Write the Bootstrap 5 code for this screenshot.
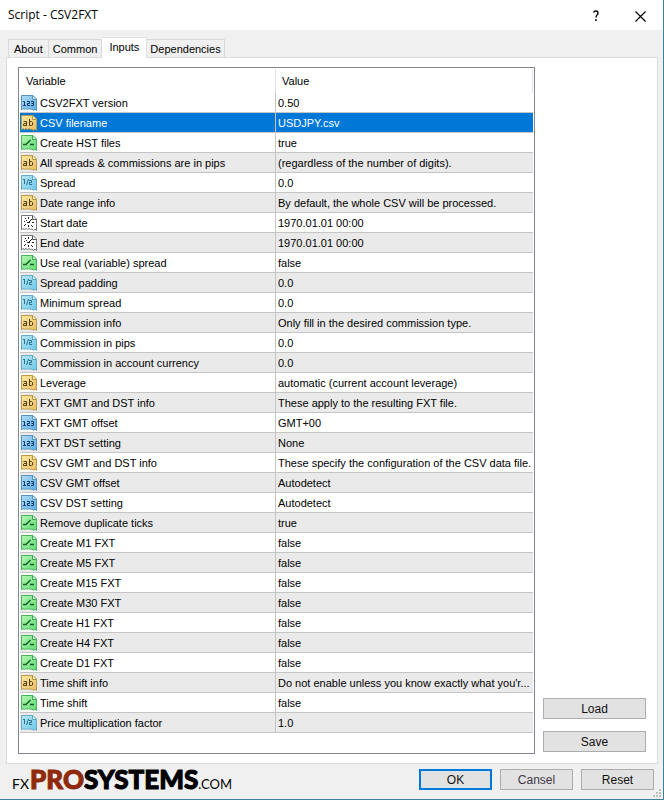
<!DOCTYPE html>
<html lang="en">
<head>
<meta charset="utf-8">
<meta name="viewport" content="width=device-width, initial-scale=1">
<title>Script - CSV2FXT</title>
<link href="https://cdn.jsdelivr.net/npm/bootstrap@5.3.0/dist/css/bootstrap.min.css" rel="stylesheet">
<style>
body{font-family:"Liberation Sans",Arial,sans-serif;font-size:11px;line-height:16px;color:#000}
.dialog{background:#f0f0f0;border-right:1px solid #3f7f9f;border-bottom:1px solid #3f7f9f}
.titlebar{height:30px;padding-left:8px;font-family:"Open Sans","Noto Sans",sans-serif;color:#000}
.titlebar h1{font-size:12px}
.title-btn{width:45px;height:30px;background:none;border:0;padding:0}
.script-tabs{padding:7px 0 0 8px;border:0}
.script-tabs .nav-link{border:1px solid #d9d9d9;border-bottom:0;border-radius:0;color:#000;background:#f0f0f0;height:18px;padding:2px 5px 0;line-height:15px;white-space:nowrap;margin:0}
.script-tabs .nav-item+.nav-item .nav-link{border-left:0;padding:2px 4px 0}
.script-tabs .nav-item .nav-link.active{background:#fff;color:#000;height:21px;margin-bottom:-1px;position:relative;z-index:1}
.script-tabs .nav-item+.nav-item .nav-link.active{padding:2px 7px 0}
.script-tabs .nav-item:last-child .nav-link{padding:2px 3px 0}
.panel{background:#fff;border:1px solid #dcdcdc;margin:0 5px 0 6px;padding:9px 11px 9px 11px}
.listbox{border:1px solid #828790;padding:1px}
.inputs{width:100%;table-layout:fixed;border-collapse:separate;border-spacing:0}
.inputs th{height:24px;padding:0 6px 0 6px;font-weight:400;border-right:1px solid #e2e2e2}
.inputs th:first-child{width:256px}
.inputs td{height:20px;padding:0 0 0 2px;border-bottom:1px solid #c5c5c5;white-space:nowrap}
.inputs td:first-child{border-right:1px solid #c5c5c5;padding-left:1px}
.inputs tbody tr:nth-child(even){background:#eaeaea}
.inputs tbody tr.chosen{background:#0078d7;color:#fff}
.inputs td svg{width:16px;height:16px;margin-right:3px;vertical-align:top}
.side{width:103px;margin-left:8px}
.dlg-btn{height:21px;padding:1px 0 0;border:1px solid #adadad;background:#e1e2e1;color:#111;border-radius:0;font-size:12px;line-height:19px}
.side .dlg-btn{margin-bottom:12px}
.side .dlg-btn:last-child{margin-bottom:2px}
.actions{gap:8px;padding:0 9px 4px 0}
.actions .dlg-btn{width:73px}
.dlg-btn.default-btn{border:2px solid #0078d7;line-height:17px}
.dlg-btn.muted-btn{color:#403848}
.footer-bar{height:35px;padding-left:12px;position:relative}
.brand{font-family:Lato,sans-serif;color:#000;font-size:14px;line-height:30px}
.brand b{font-size:26px;font-weight:900;color:#000;-webkit-text-stroke:1px currentColor}
.brand b.pro{color:#8f2a0c;margin-left:1px}
.brand small{font-size:13px}
.grip{position:absolute;right:1px;bottom:1px}
</style>
<script src="https://cdn.jsdelivr.net/npm/bootstrap@5.3.0/dist/js/bootstrap.bundle.min.js"></script>
</head>
<body>
<svg class="position-absolute" width="0" height="0" aria-hidden="true">
<defs>
<linearGradient id="gb" x2="1" y2="1"><stop stop-color="#b5dcf5"/><stop offset="1" stop-color="#58aee8"/></linearGradient>
<linearGradient id="gc" x2="1" y2="1"><stop stop-color="#b9e8f4"/><stop offset="1" stop-color="#6cc5e6"/></linearGradient>
<linearGradient id="gy" x2="1" y2="1"><stop stop-color="#f8e9a0"/><stop offset="1" stop-color="#e9bd62"/></linearGradient>
<linearGradient id="gg" x2="1" y2="1"><stop stop-color="#b5f5b5"/><stop offset="1" stop-color="#5fdc72"/></linearGradient>
<path id="sheet" d="M.5 .5H12L15.500 4V15.500L14 14L12.500 15.500L11 14L9.500 14.500L8 13.500L6.500 14.500L5 13.500L3.500 14.500L2 13.500L.5 15Z"/>
</defs>
<symbol id="int" viewBox="0 0 16 16"><use href="#sheet" fill="url(#gb)" stroke="#5592bd"/><path d="M11.500 1V4.500H15" fill="#d8effb" stroke="#5592bd"/><path d="M2 6.500H3.500V11M2 10.500H5M6 6.500H8.500V8.500H6.500V10.500H9M10 6.500H12.500V10.500H10M10.500 8.500H12.500" fill="none" stroke="#123f65"/></symbol>
<symbol id="dbl" viewBox="0 0 16 16"><use href="#sheet" fill="url(#gc)" stroke="#68acc8"/><path d="M11.500 1V4.500H15" fill="#dff6fb" stroke="#5aa5c5"/><path d="M2 4.500H3.500M3.500 4V9M7.500 4L5.500 10M8 5.500H10.500V7.500H8.500V9.500H11" fill="none" stroke="#28718f"/></symbol>
<symbol id="str" viewBox="0 0 16 16"><use href="#sheet" fill="url(#gy)" stroke="#bd9a48"/><path d="M11.500 1V4.500H15" fill="#fcf3c4" stroke="#b69342"/><path d="M2.500 6.500H5.500V11M5.500 8.500H3L2.500 9V10.500L3 10.500H6M8.500 4V10.500H10.500L11.500 10V7.500L10.500 6.500H9" fill="none" stroke="#563d0d"/></symbol>
<symbol id="bool" viewBox="0 0 16 16"><use href="#sheet" fill="url(#gg)" stroke="#48b35b"/><path d="M11.500 1V4.500H15" fill="#d9fbdc" stroke="#3da650"/><path d="M2 9.500H5L9.500 5M9 9.500H13" fill="none" stroke="#125f25" stroke-width="1.400"/></symbol>
<symbol id="date" viewBox="0 0 16 16"><use href="#sheet" fill="#fff" stroke="#777"/><path d="M11.500 1V4.500H15" fill="#fff" stroke="#555"/><path d="M7 2H8V4H7ZM4 3H5V4H4ZM10 4H11V5H10ZM3 6H4V7H3ZM5 5H6V6H5ZM6 7H9V8H6ZM8 6H9V5H10V6H9V7H8ZM11 7H13V8H11ZM3 10H4V9H5V10H4V11H3ZM7 10H8V12H7ZM10 10H11V11H10ZM11 11H12V12H11Z" fill="#222"/></symbol>
</svg>
<main class="dialog min-vh-100 d-flex flex-column">
<header class="titlebar bg-white d-flex align-items-center">
<h1 class="m-0 fw-normal flex-grow-1">Script - CSV2FXT</h1>
<button class="title-btn" type="button" aria-label="Help"><svg width="8" height="12" viewBox="0 0 8 12" fill="none" stroke="#000" stroke-width="1.400"><path d="M1.500 2.500Q2 1 4 1Q6 1 6 3Q6 4.200 5 5Q4 5.700 4 7.500M4 9V11"/></svg></button>
<button class="title-btn" type="button" aria-label="Close"><svg width="11" height="11" viewBox="0 0 11 11" stroke="#000" stroke-width="1.200"><path d="M.5 .5L10.500 10.500M10.500 .5L.5 10.500"/></svg></button>
</header>
<nav><ul class="nav nav-tabs script-tabs align-items-end flex-nowrap">
<li class="nav-item"><a class="nav-link" href="#about">About</a></li>
<li class="nav-item"><a class="nav-link" href="#common">Common</a></li>
<li class="nav-item"><a class="nav-link active" aria-current="page" href="#inputs">Inputs</a></li>
<li class="nav-item"><a class="nav-link" href="#dependencies">Dependencies</a></li>
</ul></nav>
<section class="panel flex-grow-1 d-flex" id="inputs">
<div class="listbox flex-grow-1">
<table class="inputs">
<thead><tr><th scope="col">Variable</th><th scope="col">Value</th></tr></thead>
<tbody>
<tr><td><svg><use href="#int"/></svg>CSV2FXT version</td><td>0.50</td></tr>
<tr class="chosen"><td><svg><use href="#str"/></svg>CSV filename</td><td>USDJPY.csv</td></tr>
<tr><td><svg><use href="#bool"/></svg>Create HST files</td><td>true</td></tr>
<tr><td><svg><use href="#str"/></svg>All spreads &amp; commissions are in pips</td><td>(regardless of the number of digits).</td></tr>
<tr><td><svg><use href="#dbl"/></svg>Spread</td><td>0.0</td></tr>
<tr><td><svg><use href="#str"/></svg>Date range info</td><td>By default, the whole CSV will be processed.</td></tr>
<tr><td><svg><use href="#date"/></svg>Start date</td><td>1970.01.01 00:00</td></tr>
<tr><td><svg><use href="#date"/></svg>End date</td><td>1970.01.01 00:00</td></tr>
<tr><td><svg><use href="#bool"/></svg>Use real (variable) spread</td><td>false</td></tr>
<tr><td><svg><use href="#dbl"/></svg>Spread padding</td><td>0.0</td></tr>
<tr><td><svg><use href="#dbl"/></svg>Minimum spread</td><td>0.0</td></tr>
<tr><td><svg><use href="#str"/></svg>Commission info</td><td>Only fill in the desired commission type.</td></tr>
<tr><td><svg><use href="#dbl"/></svg>Commission in pips</td><td>0.0</td></tr>
<tr><td><svg><use href="#dbl"/></svg>Commission in account currency</td><td>0.0</td></tr>
<tr><td><svg><use href="#str"/></svg>Leverage</td><td>automatic (current account leverage)</td></tr>
<tr><td><svg><use href="#str"/></svg>FXT GMT and DST info</td><td>These apply to the resulting FXT file.</td></tr>
<tr><td><svg><use href="#int"/></svg>FXT GMT offset</td><td>GMT+00</td></tr>
<tr><td><svg><use href="#int"/></svg>FXT DST setting</td><td>None</td></tr>
<tr><td><svg><use href="#str"/></svg>CSV GMT and DST info</td><td>These specify the configuration of the CSV data file.</td></tr>
<tr><td><svg><use href="#int"/></svg>CSV GMT offset</td><td>Autodetect</td></tr>
<tr><td><svg><use href="#int"/></svg>CSV DST setting</td><td>Autodetect</td></tr>
<tr><td><svg><use href="#bool"/></svg>Remove duplicate ticks</td><td>true</td></tr>
<tr><td><svg><use href="#bool"/></svg>Create M1 FXT</td><td>false</td></tr>
<tr><td><svg><use href="#bool"/></svg>Create M5 FXT</td><td>false</td></tr>
<tr><td><svg><use href="#bool"/></svg>Create M15 FXT</td><td>false</td></tr>
<tr><td><svg><use href="#bool"/></svg>Create M30 FXT</td><td>false</td></tr>
<tr><td><svg><use href="#bool"/></svg>Create H1 FXT</td><td>false</td></tr>
<tr><td><svg><use href="#bool"/></svg>Create H4 FXT</td><td>false</td></tr>
<tr><td><svg><use href="#bool"/></svg>Create D1 FXT</td><td>false</td></tr>
<tr><td><svg><use href="#str"/></svg>Time shift info</td><td>Do not enable unless you know exactly what you'r...</td></tr>
<tr><td><svg><use href="#bool"/></svg>Time shift</td><td>false</td></tr>
<tr><td><svg><use href="#dbl"/></svg>Price multiplication factor</td><td>1.0</td></tr>
</tbody>
</table>
</div>
<div class="side flex-shrink-0 d-flex flex-column justify-content-end">
<button class="btn dlg-btn" type="button">Load</button>
<button class="btn dlg-btn" type="button">Save</button>
</div>
</section>
<footer class="footer-bar d-flex align-items-center justify-content-between">
<div class="brand text-nowrap">FX<b class="pro">PRO</b><b>SYSTEMS</b><small>.COM</small></div>
<div class="actions d-flex">
<button class="btn dlg-btn default-btn" type="button">OK</button>
<button class="btn dlg-btn muted-btn" type="button">Cansel</button>
<button class="btn dlg-btn" type="button">Reset</button>
</div>
<svg class="grip" width="9" height="9" fill="#bfbfbf" aria-hidden="true"><path d="M6 0H8V2H6ZM3 3H5V5H3ZM6 3H8V5H6ZM0 6H2V8H0ZM3 6H5V8H3ZM6 6H8V8H6Z"/></svg>
</footer>
</main>
</body>
</html>
